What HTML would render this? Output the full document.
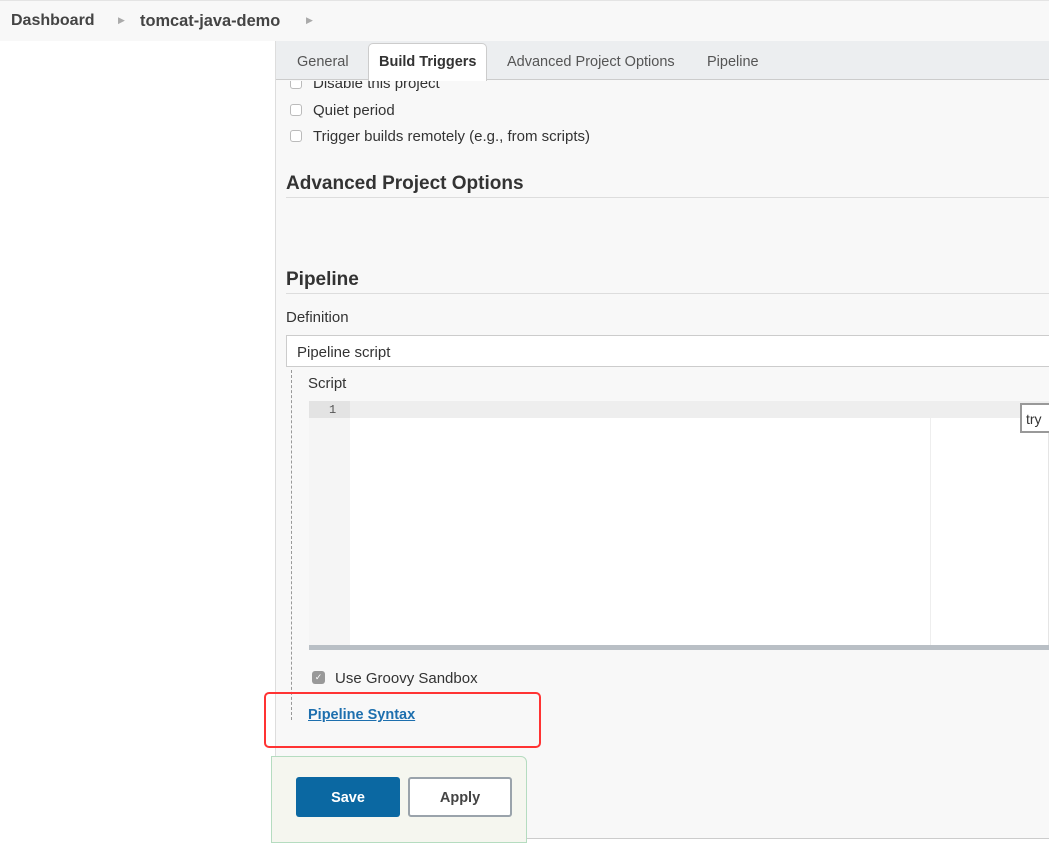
<!DOCTYPE html>
<html><head><meta charset="utf-8"><style>
*{box-sizing:border-box;margin:0;padding:0}
body{width:1049px;height:850px;overflow:hidden;background:#fff;font-family:"Liberation Sans",sans-serif;color:#333;position:relative}
.a{position:absolute}
.cb{position:absolute;width:12px;height:12px;border:1px solid #bbb;border-radius:3px;background:#fff}
.t{font-size:15px;color:#333}
</style></head><body>
<div class="a" style="left:0;top:0;width:1049px;height:41px;background:#f8f8f8;border-top:1px solid #e4e4e4"></div>
<div class="a" style="left:11px;top:12px;font-size:16px;font-weight:bold;color:#444">Dashboard</div>
<div class="a" style="left:118px;top:15px;font-size:9px;color:#aaa">▶</div>
<div class="a" style="left:140px;top:12px;font-size:16.4px;font-weight:bold;color:#444">tomcat-java-demo</div>
<div class="a" style="left:306px;top:15px;font-size:9px;color:#aaa">▶</div>

<div class="a" style="left:275px;top:41px;width:774px;height:798px;background:#f8f8f8;border-left:1px solid #ddd;border-bottom:1px solid #ccc"></div>
<div class="a" style="left:276px;top:41px;width:773px;height:39px;background:#eceef0;border-bottom:1px solid #ccc"></div>
<div class="a t" style="left:297px;top:54px;color:#555;font-size:14.5px">General</div>
<div class="a" style="left:368px;top:43px;width:119px;height:38px;background:#fff;border:1px solid #ccc;border-bottom:none;border-radius:5px 5px 0 0"></div>
<div class="a t" style="left:379px;top:54px;font-weight:bold;font-size:14.5px">Build Triggers</div>
<div class="a t" style="left:507px;top:54px;color:#555;font-size:14.5px">Advanced Project Options</div>
<div class="a t" style="left:707px;top:54px;color:#555;font-size:14.5px">Pipeline</div>

<div class="a" style="left:276px;top:81px;width:773px;height:10px;overflow:hidden"><div class="a t" style="left:37px;top:-6px">Disable this project</div><div class="cb" style="left:14px;top:-4px"></div></div>
<div class="cb" style="left:290px;top:104px"></div><div class="a t" style="left:313px;top:102px">Quiet period</div>
<div class="cb" style="left:290px;top:130px"></div><div class="a t" style="left:313px;top:128px">Trigger builds remotely (e.g., from scripts)</div>

<div class="a" style="left:286px;top:173px;font-size:19px;font-weight:bold;color:#333">Advanced Project Options</div>
<div class="a" style="left:286px;top:197px;width:763px;height:1px;background:#ddd"></div>
<div class="a" style="left:286px;top:269px;font-size:19px;font-weight:bold;color:#333">Pipeline</div>
<div class="a" style="left:286px;top:293px;width:763px;height:1px;background:#ddd"></div>
<div class="a t" style="left:286px;top:309px">Definition</div>
<div class="a" style="left:286px;top:335px;width:770px;height:32px;background:#fff;border:1px solid #ccc"></div>
<div class="a t" style="left:297px;top:344px">Pipeline script</div>
<div class="a" style="left:291px;top:370px;height:350px;border-left:1px dashed #999"></div>
<div class="a t" style="left:308px;top:375px">Script</div>

<div class="a" style="left:309px;top:401px;width:740px;height:249px;background:#fff;border:1px solid #e5e5e5"></div>
<div class="a" style="left:309px;top:401px;width:41px;height:249px;background:#f5f5f5"></div>
<div class="a" style="left:309px;top:401px;width:740px;height:17px;background:#eee"></div>
<div class="a" style="left:309px;top:401px;width:41px;height:17px;background:#e3e3e3"></div>
<div class="a" style="left:329px;top:403px;font-size:12px;color:#555;font-family:'Liberation Mono',monospace">1</div>
<div class="a" style="left:930px;top:418px;width:1px;height:228px;background:#eee"></div>
<div class="a" style="left:309px;top:645px;width:740px;height:5px;background:#b9bfc5"></div>
<div class="a" style="left:1020px;top:403px;width:40px;height:30px;background:#fff;border:1px solid #999;border-width:2px 0 2px 2px"></div>
<div class="a t" style="left:1026px;top:411px;font-size:14px">try</div>

<div class="a" style="left:312px;top:671px;width:13px;height:13px;background:#999;border-radius:3px;color:#fff;font-size:9px;text-align:center;line-height:13px">✓</div>
<div class="a t" style="left:335px;top:670px">Use Groovy Sandbox</div>
<div class="a" style="left:264px;top:692px;width:277px;height:56px;border:2px solid #f33;border-radius:5px"></div>
<div class="a" style="left:308px;top:707px;font-size:14.5px;font-weight:bold;color:#1d6fae;text-decoration:underline">Pipeline Syntax</div>

<div class="a" style="left:271px;top:756px;width:256px;height:87px;background:#f5f6ef;border:1px solid #b5dcc0;border-radius:0 6px 0 0"></div>
<div class="a" style="left:296px;top:777px;width:104px;height:40px;background:#0b68a2;border-radius:3px;color:#fff;font-weight:bold;font-size:14.5px;text-align:center;line-height:42px">Save</div>
<div class="a" style="left:408px;top:777px;width:104px;height:40px;background:#fff;border:2px solid #9aa3ab;border-radius:3px;color:#444;font-weight:bold;font-size:14.5px;text-align:center;line-height:38px">Apply</div>
</body></html>
